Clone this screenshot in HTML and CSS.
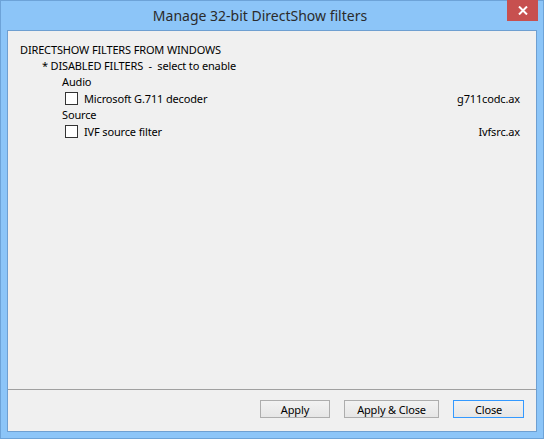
FILE: index.html
```html
<!DOCTYPE html>
<html lang="en">
<head>
<meta charset="UTF-8">
<title>Manage 32-bit DirectShow filters</title>
<link rel="stylesheet" href="styles.css">
</head>
<body>
<div class="window">
  <div class="titlebar">
    <div class="title">Manage 32-bit DirectShow filters</div>
    <div class="close-x">
      <svg width="10" height="9" viewBox="0 0 10 9">
        <path d="M1 0.5 L9 8.5 M9 0.5 L1 8.5" stroke="#fff" stroke-width="2"/>
      </svg>
    </div>
  </div>

  <div class="client">
    <div class="filters">
      <div class="row">DIRECTSHOW FILTERS FROM WINDOWS</div>
      <div class="row lvl1">* DISABLED FILTERS &nbsp;- &nbsp;select to enable</div>
      <div class="row lvl2">Audio</div>
      <div class="row item">
        <span class="check"></span>
        <span class="name">Microsoft G.711 decoder</span>
        <span class="file">g711codc.ax</span>
      </div>
      <div class="row lvl2">Source</div>
      <div class="row item">
        <span class="check"></span>
        <span class="name">IVF source filter</span>
        <span class="file">Ivfsrc.ax</span>
      </div>
    </div>

    <div class="footer">
      <button class="button">Apply</button>
      <button class="button wide">Apply &amp; Close</button>
      <button class="button default">Close</button>
    </div>
  </div>
</div>
</body>
</html>
```

FILE: styles.css
```css
body {
  margin: 0;
  font-family: "Noto Sans", "Open Sans", sans-serif;
  font-size: 11px;
  letter-spacing: -0.15px;
  color: #000;
  background: #fff;
}

.window {
  width: 544px;
  height: 439px;
  box-sizing: border-box;
  border: 1px solid #6da3d8;
  background-color: #8cc5f8;
  padding: 0 6px 6px 6px;
  display: flex;
  flex-direction: column;
}

/* title bar */
.titlebar {
  height: 29px;
  display: flex;
  align-items: flex-start;
}
.title {
  flex: 1;
  text-align: center;
  font-size: 14px;
  letter-spacing: 0;
  line-height: 29px;
  color: #2b2b2b;
  padding-left: 6px;
}
.close-x {
  width: 31px;
  height: 21px;
  margin-top: -1px;
  margin-right: -1px;
  background-color: #c7504f;
  display: flex;
  align-items: center;
  justify-content: center;
}

/* client area */
.client {
  flex: 1;
  border: 1px solid #6e9fd1;
  background-color: #f0f0f0;
  display: flex;
  flex-direction: column;
}
.filters {
  flex: 1;
  padding: 11px 16px 0 12px;
}
.row {
  height: 16px;
  line-height: 16px;
  white-space: pre;
}
.lvl1 { padding-left: 22px; }
.lvl2 { padding-left: 42px; }
.item {
  display: flex;
  align-items: center;
  padding-left: 45px;
  height: 17px;
}
.check {
  width: 11px;
  height: 11px;
  border: 1px solid #333;
  background: #fff;
  margin-right: 6px;
}
.name { flex: 1; }
.file { text-align: right; }

/* buttons */
.footer {
  border-top: 1px solid #a0a0a0;
  height: 42px;
  display: flex;
  justify-content: flex-end;
  align-items: flex-start;
  padding: 10px 12px 0 0;
  box-sizing: border-box;
  gap: 14px;
}
.button {
  width: 70px;
  height: 18px;
  padding: 0;
  font-family: inherit;
  font-size: 11px;
  letter-spacing: inherit;
  color: #000;
  border: 1px solid #adadad;
  background: linear-gradient(#f2f2f2, #e6e6e6);
  border-radius: 0;
}
.button.wide { width: 95px; }
.button.default {
  width: 71px;
  border-color: #3399ff;
}
```
